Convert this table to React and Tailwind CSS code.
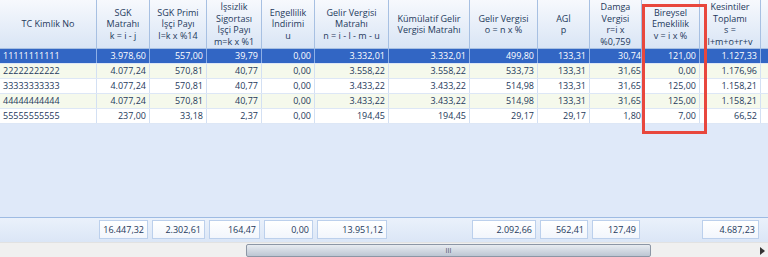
import React from 'react';

const cols = [
  { w: 97, head: ['TC Kimlik No'], align: 'left' },
  { w: 53, head: ['SGK', 'Matrahı', 'k = i - j'] },
  { w: 57, head: ['SGK Primi', 'İşçi Payı', 'l=k x %14'] },
  { w: 55, head: ['İşsizlik', 'Sigortası', 'İşçi Payı', 'm=k x %1'] },
  { w: 53, head: ['Engellilik', 'İndirimi', 'u'] },
  { w: 74, head: ['Gelir Vergisi', 'Matrahı', 'n = i - l - m - u'] },
  { w: 81, head: ['Kümülatif Gelir', 'Vergisi Matrahı'] },
  { w: 68, head: ['Gelir Vergisi', 'o = n x %'] },
  { w: 52, head: ['AGİ', 'p'] },
  { w: 52, head: ['Damga', 'Vergisi', 'r=i x', '%0,759'], flush: true },
  { w: 58, head: ['Bireysel', 'Emeklilik', 'v = i x %'] },
  { w: 61, head: ['Kesintiler', 'Toplamı', 's =', 'l+m+o+r+v'] },
];

const rows = [
  ['11111111111', '3.978,60', '557,00', '39,79', '0,00', '3.332,01', '3.332,01', '499,80', '133,31', '30,74', '121,00', '1.127,33'],
  ['22222222222', '4.077,24', '570,81', '40,77', '0,00', '3.558,22', '3.558,22', '533,73', '133,31', '31,65', '0,00', '1.176,96'],
  ['33333333333', '4.077,24', '570,81', '40,77', '0,00', '3.433,22', '3.433,22', '514,98', '133,31', '31,65', '125,00', '1.158,21'],
  ['44444444444', '4.077,24', '570,81', '40,77', '0,00', '3.433,22', '3.433,22', '514,98', '133,31', '31,65', '125,00', '1.158,21'],
  ['55555555555', '237,00', '33,18', '2,37', '0,00', '194,45', '194,45', '29,17', '29,17', '1,80', '7,00', '66,52'],
];

const totals = [null, '16.447,32', '2.302,61', '164,47', '0,00', '13.951,12', null, '2.092,66', '562,41', '127,49', null, '4.687,23'];

function HeaderRow() {
  return (
    <div className="flex h-[49px] border-b border-[#a7c0e2] bg-gradient-to-b from-[#f7f9fd] to-[#d9e5f5]">
      {cols.map((c, i) => (
        <div
          key={i}
          style={{ width: c.w }}
          className="shrink-0 flex flex-col items-center justify-center border-r border-[#a7c0e2] text-center leading-[11.5px] text-[#1e395b]"
        >
          {c.head.map((t, j) => (
            <span key={j} className="whitespace-nowrap">{t}</span>
          ))}
        </div>
      ))}
      <div className="flex-1" />
    </div>
  );
}

function DataRow({ cells, idx }) {
  const selected = idx === 0;
  const bg = selected ? 'bg-[#3266c4] text-white' : idx % 2 === 1 ? 'bg-[#f5f9ec] text-[#1e395b]' : 'bg-white text-[#1e395b]';
  return (
    <div className={`flex h-[15px] border-b border-[#dde7f6] ${bg}`}>
      {cells.map((v, i) => (
        <div
          key={i}
          style={{ width: cols[i].w }}
          className={`shrink-0 h-full flex items-center border-r ${selected ? 'border-[#8fb0e6]' : 'border-[#d3e0f3]'} ${
            i === 0 ? 'justify-start pl-[3px]' : cols[i].flush ? 'justify-end pr-0' : 'justify-end pr-[3px]'
          }`}
        >
          {v}
        </div>
      ))}
      <div className="flex-1" />
    </div>
  );
}

function FooterRow() {
  return (
    <div className="flex h-[25px] border-t border-[#9ebbe3] bg-gradient-to-b from-[#eaf1fb] to-[#dbe6f6] items-center">
      {cols.map((c, i) => (
        <div key={i} style={{ width: c.w }} className="shrink-0 h-full px-[2px] py-[2px]">
          {totals[i] && (
            <div className="h-[19px] flex items-center justify-end pr-[3px] border border-[#bcd0ec] bg-gradient-to-b from-white to-[#f2f6fc] text-[#1e395b]">
              {totals[i]}
            </div>
          )}
        </div>
      ))}
    </div>
  );
}

function ScrollBar() {
  return (
    <div className="flex h-[15px] bg-[#f0f0f0] border-t border-[#e2e2e2] pt-[1px]">
      <div className="w-[246px] shrink-0" />
      <div className="w-[405px] shrink-0 h-full border border-[#8c96a5] rounded-[2px] bg-gradient-to-b from-[#e8ecf1] to-[#bcc6d3] flex items-center justify-center">
        <span className="text-[7px] leading-none text-[#4a5563]">III</span>
      </div>
      <div className="flex-1 flex items-center justify-end pr-[3px]">
        <svg width="5" height="8" viewBox="0 0 5 8">
          <path d="M0 0 L5 4 L0 8 Z" fill="#333" />
        </svg>
      </div>
    </div>
  );
}

export default function App() {
  return (
    <div
      className="relative w-[768px] h-[257px] overflow-hidden bg-[#dfe9f9] text-[9px]"
      style={{ fontFamily: '"Open Sans", "Noto Sans", sans-serif' }}
    >
      <div className="flex flex-col h-full">
        <HeaderRow />
        {rows.map((r, i) => (
          <DataRow key={i} cells={r} idx={i} />
        ))}
        <div className="flex-1" />
        <FooterRow />
        <ScrollBar />
      </div>
      <div className="absolute left-[642px] top-[4px] w-[65px] h-[130px] border-[3px] border-[#e8473d]" />
    </div>
  );
}
